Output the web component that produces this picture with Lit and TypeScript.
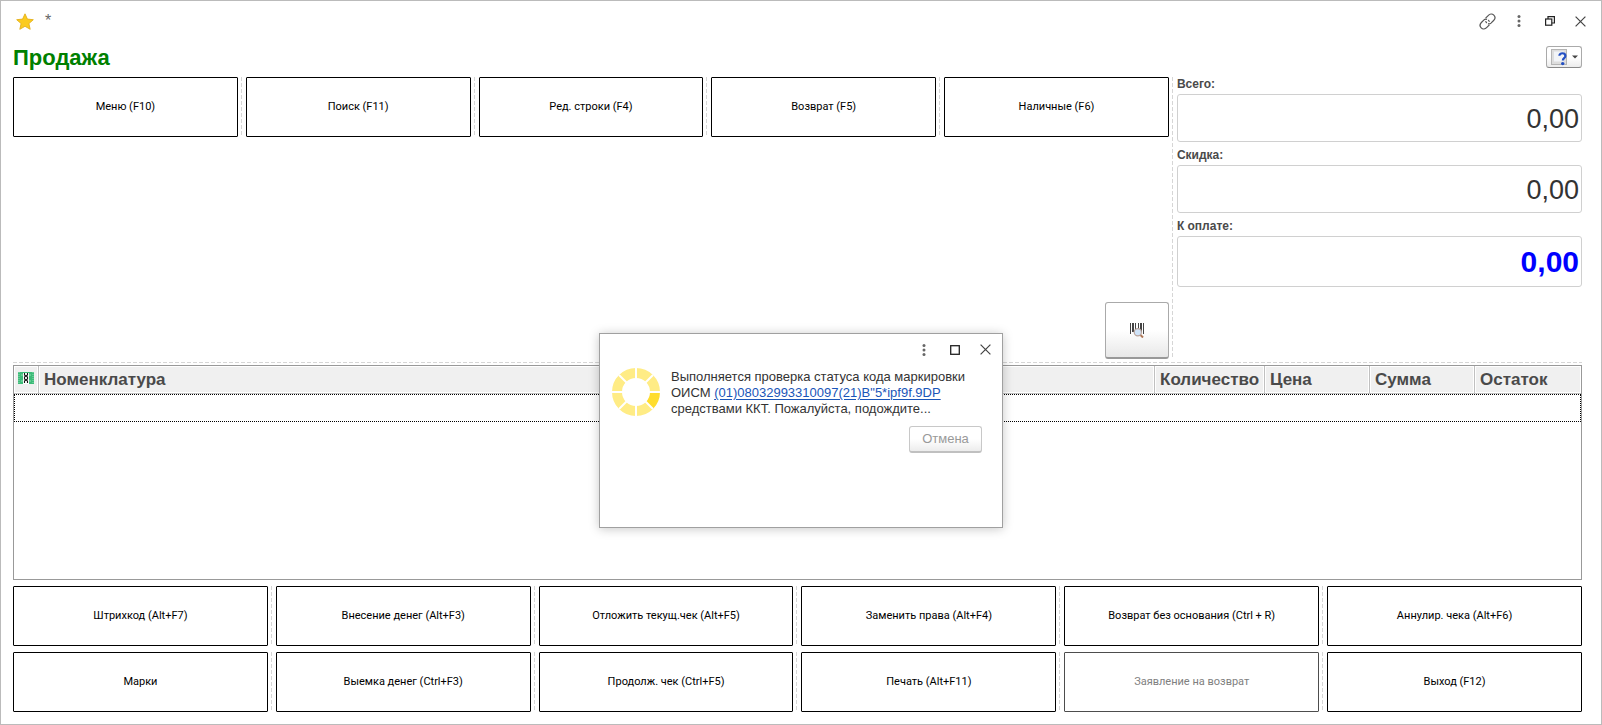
import { LitElement, html, css, svg } from "lit";
import { customElement, property } from "lit/decorators.js";

type Action = { label: string; disabled?: boolean };

const topActions: Action[] = [
  { label: "Меню (F10)" },
  { label: "Поиск (F11)" },
  { label: "Ред. строки (F4)" },
  { label: "Возврат (F5)" },
  { label: "Наличные (F6)" },
];

const bottomActions: Action[][] = [
  [
    { label: "Штрихкод (Alt+F7)" },
    { label: "Внесение денег (Alt+F3)" },
    { label: "Отложить текущ.чек (Alt+F5)" },
    { label: "Заменить права (Alt+F4)" },
    { label: "Возврат без основания (Ctrl + R)" },
    { label: "Аннулир. чека (Alt+F6)" },
  ],
  [
    { label: "Марки" },
    { label: "Выемка денег (Ctrl+F3)" },
    { label: "Продолж. чек (Ctrl+F5)" },
    { label: "Печать (Alt+F11)" },
    { label: "Заявление на возврат", disabled: true },
    { label: "Выход (F12)" },
  ],
];

const dotsIcon = html`<svg width="4" height="12" viewBox="0 0 4 12" aria-hidden="true">
  <g fill="#666"><circle cx="2" cy="1.6" r="1.5" /><circle cx="2" cy="6" r="1.5" /><circle cx="2" cy="10.4" r="1.5" /></g>
</svg>`;

const closeIcon = html`<svg width="11" height="11" viewBox="0 0 11 11" aria-hidden="true">
  <path d="M.6.6l9.8 9.8M10.4.6L.6 10.4" stroke="#444" stroke-width="1.2" fill="none" />
</svg>`;

// Row of equally wide action buttons divided by dashed lines.
@customElement("action-row")
export class ActionRow extends LitElement {
  @property({ attribute: false }) actions: Action[] = [];

  static styles = css`
    :host { display: flex; height: 60px; }
    .action {
      flex: 1 1 0;
      min-width: 0;
      padding: 0;
      border: 1px solid #000;
      border-radius: 1px;
      background: #fff;
      color: #000;
      font: 11px/16px Roboto, "Liberation Sans", sans-serif;
    }
    .action:disabled { border-color: #4d4d4d; color: #808080; }
    .divider {
      width: 1px;
      margin: 0 4px 0 3px;
      background: repeating-linear-gradient(#d6d6d6 0 4px, transparent 4px 6px);
    }
  `;

  render() {
    return this.actions.map(
      (a, i) => html`${i ? html`<span class="divider"></span>` : ""}<button class="action" ?disabled=${a.disabled}>${a.label}</button>`
    );
  }
}

@customElement("wait-dialog")
export class WaitDialog extends LitElement {
  static styles = css`
    :host {
      box-sizing: border-box;
      display: block;
      width: 404px;
      min-height: 195px;
      padding: 0 20px 18px 12px;
      border: 1px solid #a0a0a0;
      background: #fff;
      box-shadow: 0 1px 10px rgba(0, 0, 0, 0.22);
      font: 13px/16px "Liberation Sans", Arial, sans-serif;
      color: #333;
    }
    .bar { display: flex; justify-content: flex-end; height: 31px; margin-right: -19px; }
    .tool {
      display: grid;
      place-items: center;
      width: 31px;
      padding: 0;
      border: 0;
      background: none;
    }
    .body { display: flex; gap: 11px; padding-top: 3px; }
    .spinner { flex: none; }
    .message { margin: 0; padding-top: 1px; white-space: nowrap; }
    .code { color: #1a55b8; text-underline-offset: 2px; }
    .footer { display: flex; justify-content: flex-end; padding-top: 9px; }
    .cancel {
      width: 73px;
      height: 27px;
      padding: 0;
      border: 1px solid #c8c8c8;
      border-bottom: 2px solid #c0c0c0;
      border-radius: 3px;
      background: linear-gradient(#fff 50%, #ececec);
      color: #999;
      font: inherit;
    }
  `;

  render() {
    const segments = Array.from({ length: 8 }, (_, i) => {
      const a = (i * Math.PI) / 4;
      const b = a + Math.PI / 4;
      const p = (r: number, t: number) => `${24 + r * Math.cos(t)} ${24 + r * Math.sin(t)}`;
      return svg`<path fill=${i === 0 ? "#ffdd2d" : "#ffec85"}
        d="M${p(14, a)}L${p(24, a)}A24 24 0 0 1 ${p(24, b)}L${p(14, b)}A14 14 0 0 0 ${p(14, a)}Z" />`;
    });
    return html`
      <div class="bar">
        <button class="tool" aria-label="Ещё">${dotsIcon}</button>
        <button class="tool" aria-label="Развернуть">
          <svg width="10" height="10" viewBox="0 0 10 10"><rect x=".7" y=".7" width="8.6" height="8.6" fill="none" stroke="#222" stroke-width="1.3" /></svg>
        </button>
        <button class="tool" aria-label="Закрыть">${closeIcon}</button>
      </div>
      <div class="body">
        <svg class="spinner" width="48" height="48" viewBox="0 0 48 48" role="img" aria-label="Ожидание">
          ${segments}
          <path d="M24 0V48M0 24H48M7 7L41 41M41 7L7 41" stroke="#fff" stroke-width="2" />
        </svg>
        <p class="message">
          Выполняется проверка статуса кода маркировки<br />
          ОИСМ <a class="code" href="#code">(01)08032993310097(21)B"5*ipf9f.9DP</a><br />
          средствами ККТ. Пожалуйста, подождите...
        </p>
      </div>
      <div class="footer"><button class="cancel">Отмена</button></div>
    `;
  }
}

@customElement("app-root")
export class AppRoot extends LitElement {
  static styles = css`
    :host {
      box-sizing: border-box;
      position: relative;
      display: flex;
      flex-direction: column;
      min-height: 100vh;
      border: 1px solid #bbb;
      background: #fff;
      color: #4a4a4a;
      font-family: "Liberation Sans", Arial, sans-serif;
    }
    .titlebar { display: flex; align-items: center; height: 40px; padding: 0 5px 0 15px; }
    .star { margin-right: 11px; }
    .modified { flex: 1; font-size: 16px; line-height: 16px; color: #666; }
    .tool {
      display: grid;
      place-items: center;
      width: 31px;
      height: 31px;
      padding: 0;
      border: 0;
      background: none;
    }
    .content { flex: 1; display: flex; flex-direction: column; padding: 0 19px 12px 12px; }
    .heading { display: flex; justify-content: space-between; align-items: flex-start; height: 36px; }
    .title { margin: 0; padding-top: 4px; font-size: 22px; line-height: 26px; font-weight: bold; color: #008000; }
    .help {
      display: flex;
      align-items: center;
      justify-content: center;
      gap: 4px;
      width: 36px;
      height: 22px;
      margin-top: 5px;
      padding: 0;
      border: 1px solid #aaa;
      border-bottom-color: #888;
      border-radius: 3px;
      background: linear-gradient(#fff 50%, #ececec);
    }
    .upper { display: grid; grid-template-columns: minmax(0, 37fr) 7px minmax(0, 13fr); }
    .left { display: flex; flex-direction: column; gap: 165px; }
    .vline {
      width: 1px;
      margin: 0 3px;
      background: repeating-linear-gradient(#d6d6d6 0 4px, transparent 4px 6px);
    }
    .hline {
      height: 1px;
      margin: 3px 0 2px;
      background: repeating-linear-gradient(90deg, #d6d6d6 0 4px, transparent 4px 6px);
    }
    .scan {
      align-self: flex-end;
      display: grid;
      place-items: center;
      width: 64px;
      height: 57px;
      padding: 0;
      border: 1px solid #aaa;
      border-bottom: 2px solid #999;
      border-radius: 3px;
      background: linear-gradient(#fff 50%, #e8e8e8);
    }
    .totals { display: flex; flex-direction: column; padding-left: 1px; }
    .label { height: 17px; font-size: 12px; line-height: 14px; font-weight: bold; }
    .amount {
      box-sizing: border-box;
      width: 100%;
      height: 48px;
      margin: 0 0 6px;
      padding: 2px 2px 0;
      border: 1px solid #d0d0d0;
      border-radius: 3px;
      background: #fff;
      color: #333;
      font: 27px "Liberation Sans", Arial, sans-serif;
      text-align: right;
    }
    .due { height: 51px; padding-top: 0; color: #00f; font-weight: bold; font-size: 30px; }
    .goods { flex: 1; min-height: 100px; border: 1px solid #999; margin-bottom: 6px; }
    .grid { width: 100%; border-collapse: separate; border-spacing: 0; table-layout: fixed; }
    .head {
      box-sizing: border-box;
      height: 28px;
      padding: 1px 0 0 5px;
      border-right: 1px solid #c0c0c0;
      border-bottom: 1px solid #c0c0c0;
      background: #f0f0f0;
      box-shadow: inset 0 0 0 1px #fff;
      font-size: 17px;
      line-height: 20px;
      text-align: left;
      white-space: nowrap;
    }
    .head:last-child { border-right: 0; }
    .mark { width: 25px; padding: 0 0 0 4px; }
    .mark svg { display: block; margin-bottom: 4px; }
    .qty { width: 110px; }
    .sum { width: 105px; }
    .rest { width: 106px; }
    .current { outline: 1px dotted #000; outline-offset: -1px; }
    .cell { height: 28px; padding: 0; }
    .bottom { display: flex; flex-direction: column; gap: 6px; }
    .dialog { position: absolute; left: 50%; top: 332px; transform: translateX(-50%); }
  `;

  render() {
    return html`
      <header class="titlebar">
        <svg class="star" width="18" height="17" viewBox="0 0 18 17" aria-hidden="true">
          <path d="M9 .8l2.4 5.3 5.9.6-4.4 3.9 1.3 5.7L9 13.3l-5.2 3 1.3-5.7L.7 6.7l5.9-.6z" fill="#fbcb1e" stroke="#e3b01c" stroke-width=".9" />
        </svg>
        <span class="modified">*</span>
        <button class="tool" aria-label="Ссылка">
          <svg width="17" height="17" viewBox="0 0 17 17" fill="none" stroke="#555" stroke-width="1.2">
            <path d="M6.6 5.2L9.4 2.4C10.9.8 13.1.4 14.8 2.1s1.3 3.9-.2 5.4L12 10.1C11 11 10 11 9 10.6" />
            <path d="M10.4 11.8L7.6 14.6C6.1 16.2 3.9 16.6 2.2 14.9S.9 11 2.4 9.5L5 6.9C6 6 7 6 8 6.4" />
            <path d="M6.6 8.2C6.8 9 7.2 9.6 7.9 10M10.4 8.8C10.2 8 9.8 7.4 9.1 7" />
          </svg>
        </button>
        <button class="tool" aria-label="Ещё">${dotsIcon}</button>
        <button class="tool" aria-label="Свернуть в окно">
          <svg width="10" height="10" viewBox="0 0 10 10" fill="none" stroke="#222" stroke-width="1.2">
            <rect x=".6" y="3" width="6.2" height="6.2" /><path d="M3 3V.6h6.4V7H6.8" />
          </svg>
        </button>
        <button class="tool" aria-label="Закрыть">${closeIcon}</button>
      </header>
      <main class="content">
        <div class="heading">
          <h1 class="title">Продажа</h1>
          <button class="help" aria-label="Справка">
            <svg width="17" height="17" viewBox="0 0 17 17">
              <rect x=".5" y=".5" width="15" height="15" fill="#ddd" stroke="#b5b5b5" />
              <rect x="3" y="2.5" width="10" height="10" fill="#f2f4f7" />
              <path d="M8.4 6.8c0-3.4 6-3.4 6 .2 0 2.2-2.6 2.2-2.6 4.4" fill="none" stroke="#2450c4" stroke-width="2.2" />
              <circle cx="11.7" cy="14.6" r="1.7" fill="#2450c4" />
            </svg>
            <svg width="6" height="4" viewBox="0 0 6 4"><path d="M0 .4h6L3 3.6z" fill="#444" /></svg>
          </button>
        </div>
        <section class="upper">
          <div class="left">
            <action-row .actions=${topActions}></action-row>
            <button class="scan" aria-label="Поиск по штрихкоду">
              <svg width="16" height="16" viewBox="0 0 16 16">
                <path d="M1.5 1v11M6.5 1v9M9.5 1v9M14.5 1v11" stroke="#444" />
                <path d="M4 1v9M12 1v9" stroke="#444" stroke-width="2" />
                <path d="M11 12.5l3 3" stroke="#b07858" stroke-width="2" />
                <circle cx="8.8" cy="10.2" r="3.6" fill="#cfe3f8" stroke="#b9a49c" stroke-width="1.2" />
              </svg>
            </button>
          </div>
          <span class="vline"></span>
          <div class="totals">
            <label class="label" for="total">Всего:</label>
            <input class="amount" id="total" readonly .value=${"0,00"} />
            <label class="label" for="discount">Скидка:</label>
            <input class="amount" id="discount" readonly .value=${"0,00"} />
            <label class="label" for="due">К оплате:</label>
            <input class="amount due" id="due" readonly .value=${"0,00"} />
          </div>
        </section>
        <span class="hline"></span>
        <section class="goods">
          <table class="grid">
            <thead>
              <tr>
                <th class="head mark" aria-label="Маркировка">
                  <svg width="16" height="12" viewBox="0 0 16 12">
                    <rect width="16" height="12" fill="#3dbb78" />
                    <path d="M1 0v12M15 0v12" stroke="#8fdcb2" stroke-dasharray="1 1" />
                    <path d="M3 3h3M3 9h3M10 3h3M10 9h3" stroke="#8fdcb2" />
                    <rect x="5" y="1" width="6" height="11" fill="#fff" />
                    <path d="M6.5 1v2l3 2v2l-3 2v2M9.5 1v2l-3 2v2l3 2v2" fill="none" stroke="#111" stroke-width="1.1" />
                  </svg>
                </th>
                <th class="head">Номенклатура</th>
                <th class="head qty">Количество</th>
                <th class="head sum">Цена</th>
                <th class="head sum">Сумма</th>
                <th class="head rest">Остаток</th>
              </tr>
            </thead>
            <tbody>
              <tr class="current">
                <td class="cell"></td><td class="cell"></td><td class="cell"></td>
                <td class="cell"></td><td class="cell"></td><td class="cell"></td>
              </tr>
            </tbody>
          </table>
        </section>
        <section class="bottom">
          ${bottomActions.map((row) => html`<action-row .actions=${row}></action-row>`)}
        </section>
      </main>
      <wait-dialog class="dialog" role="dialog" aria-label="Проверка кода маркировки"></wait-dialog>
    `;
  }
}
